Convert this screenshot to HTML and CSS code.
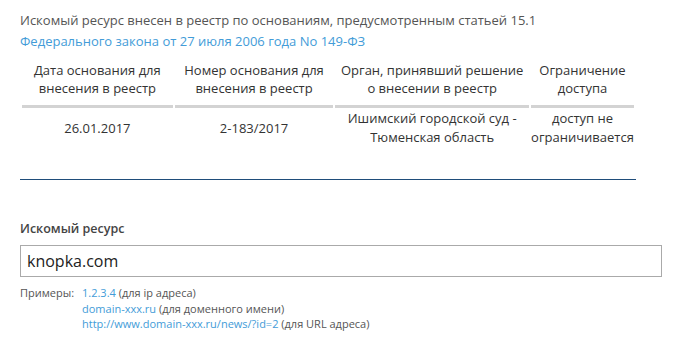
FILE: index.html
```html
<!DOCTYPE html>
<html lang="ru">
<head>
    <meta charset="UTF-8">
    <title>Проверка ресурса</title>
    <link rel="stylesheet" href="styles.css">
</head>
<body>
    <div class="container">
        <div class="notice">
            Искомый ресурс внесен в реестр по основаниям, предусмотренным статьей 15.1<br>
            <a href="#" class="link">Федерального закона от 27 июля 2006 года No 149-ФЗ</a>
        </div>

        <table class="reestr">
            <thead>
                <tr>
                    <th class="col-date">Дата основания для внесения в реестр</th>
                    <th class="col-num">Номер основания для внесения в реестр</th>
                    <th class="col-org">Орган, принявший решение о внесении в реестр</th>
                    <th class="col-limit">Ограничение доступа</th>
                </tr>
            </thead>
            <tbody>
                <tr>
                    <td>26.01.2017</td>
                    <td>2-183/2017</td>
                    <td>Ишимский городской суд - Тюменская область</td>
                    <td>доступ не ограничивается</td>
                </tr>
            </tbody>
        </table>

        <div class="divider"></div>

        <div class="search">
            <div class="search-title">Искомый ресурс</div>
            <div class="input-box">knopka.com</div>
            <div class="examples">
                <div class="examples-label">Примеры:</div>
                <div class="examples-list">
                    <div><a href="#" class="link">1.2.3.4</a> (для ip адреса)</div>
                    <div><a href="#" class="link">domain-xxx.ru</a> (для доменного имени)</div>
                    <div><a href="#" class="link">http://www.domain-xxx.ru/news/?id=2</a> (для URL адреса)</div>
                </div>
            </div>
        </div>
    </div>
</body>
</html>
```

FILE: styles.css
```css
* {
    margin: 0;
    padding: 0;
    box-sizing: border-box;
}

body {
    font-family: 'Open Sans', 'DejaVu Sans', sans-serif;
    background: #fff;
    color: #555;
}

.container {
    padding: 10px 20px;
}

.link {
    color: #439cd8;
    text-decoration: none;
}

.notice {
    font-size: 13px;
    line-height: 21px;
}

.reestr {
    width: 616px;
    margin-top: 9px;
    border-collapse: separate;
    border-spacing: 2px 0;
    font-size: 13px;
    color: #333;
    text-align: center;
}

.reestr th {
    font-weight: normal;
    line-height: 18px;
    padding: 0 0 8px;
    border-bottom: 3px solid #d3d3d3;
    vertical-align: top;
}

.reestr td {
    line-height: 19px;
    padding: 1px 0 0;
    vertical-align: middle;
}

.col-date { width: 151px; }
.col-num { width: 159px; }
.col-org { width: 194px; }
.col-limit { width: 103px; }

.divider {
    width: 616px;
    margin-top: 32px;
    border-top: 1px solid #1f4d7a;
}

.search {
    margin-top: 40px;
}

.search-title {
    font-size: 12.5px;
    font-weight: 600;
    color: #444;
    margin-bottom: 8px;
}

.input-box {
    width: 642px;
    height: 32px;
    border: 1px solid #aaa;
    padding: 0 6px;
    font-size: 16px;
    line-height: 30px;
    color: #222;
}

.examples {
    display: flex;
    margin-top: 8px;
    font-size: 11px;
    line-height: 15.5px;
}

.examples-label {
    width: 62px;
    flex-shrink: 0;
}
```
